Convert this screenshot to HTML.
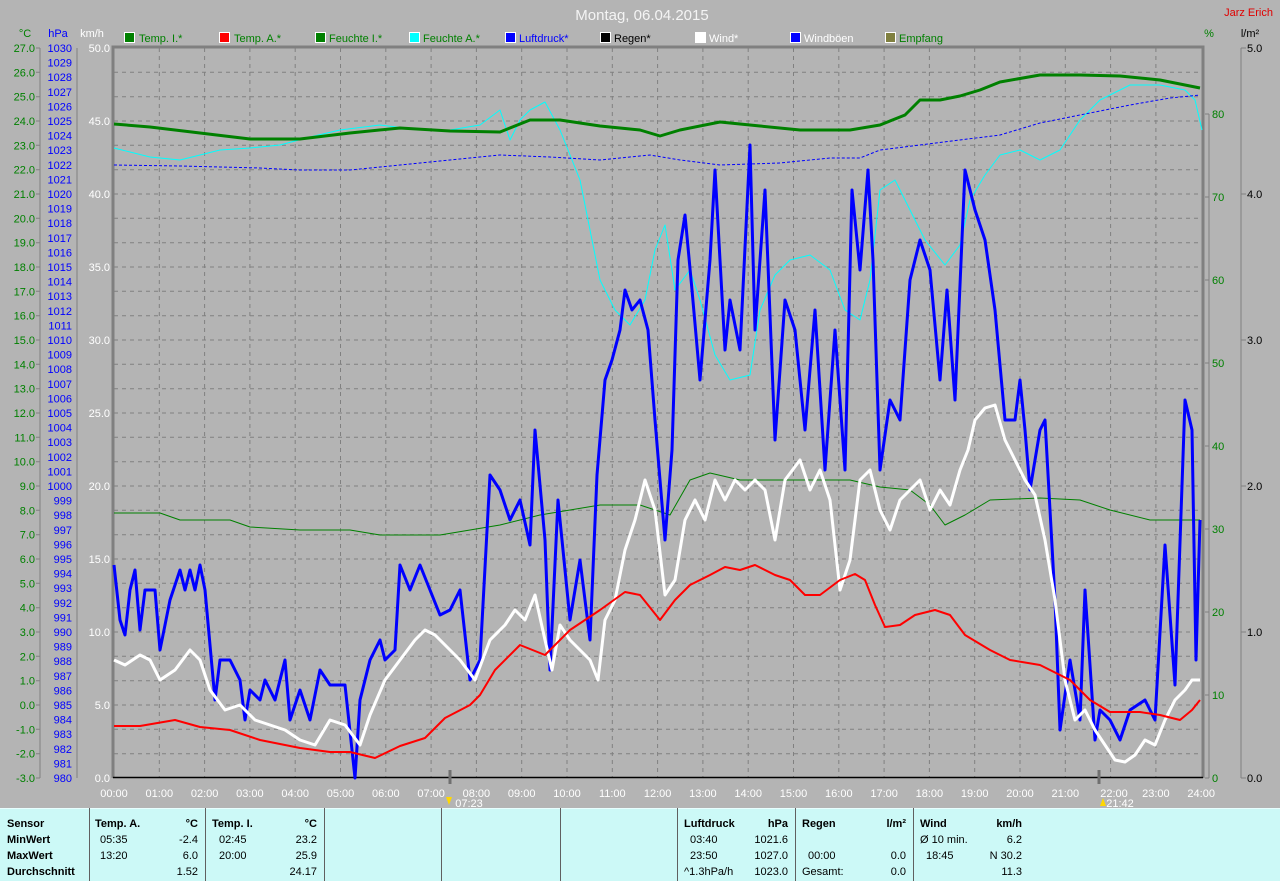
<!DOCTYPE html>
<html><head><meta charset="utf-8"><style>
html,body{margin:0;padding:0;background:#b4b4b4;}
svg{display:block;font-family:"Liberation Sans",sans-serif;}
</style></head><body>
<svg width="1280" height="881" viewBox="0 0 1280 881" xmlns="http://www.w3.org/2000/svg">
<rect width="1280" height="881" fill="#b4b4b4"/>
<text x="642" y="20" fill="#f4f4f4" font-size="15" text-anchor="middle">Montag, 06.04.2015</text>
<text x="1273" y="16" fill="#e00000" font-size="11" text-anchor="end">Jarz Erich</text>
<!-- legend -->
<g font-size="11">
<rect x="124.5" y="32.5" width="10" height="10" fill="#008000" stroke="#fff"/><text x="139" y="42" fill="#008000">Temp. I.*</text>
<rect x="219.5" y="32.5" width="10" height="10" fill="#ff0000" stroke="#fff"/><text x="234" y="42" fill="#008000">Temp. A.*</text>
<rect x="315.5" y="32.5" width="10" height="10" fill="#008000" stroke="#fff"/><text x="329" y="42" fill="#008000">Feuchte I.*</text>
<rect x="409.5" y="32.5" width="10" height="10" fill="#00ffff" stroke="#fff"/><text x="423" y="42" fill="#008000">Feuchte A.*</text>
<rect x="505.5" y="32.5" width="10" height="10" fill="#0000ff" stroke="#fff"/><text x="519" y="42" fill="#0000ff">Luftdruck*</text>
<rect x="600.5" y="32.5" width="10" height="10" fill="#000" stroke="#fff"/><text x="614" y="42" fill="#000">Regen*</text>
<rect x="695.5" y="32.5" width="10" height="10" fill="#fff" stroke="#fff"/><text x="709" y="42" fill="#fff">Wind*</text>
<rect x="790.5" y="32.5" width="10" height="10" fill="#0000ff" stroke="#fff"/><text x="804" y="42" fill="#fff">Windböen</text>
<rect x="885.5" y="32.5" width="10" height="10" fill="#808040" stroke="#fff"/><text x="899" y="42" fill="#008000">Empfang</text>
</g>
<!-- axis headers -->
<g font-size="11">
<text x="25" y="37" fill="#008000" text-anchor="middle">°C</text>
<text x="58" y="37" fill="#0000ff" text-anchor="middle">hPa</text>
<text x="92" y="37" fill="#fff" text-anchor="middle">km/h</text>
<text x="1209" y="37" fill="#008000" text-anchor="middle">%</text>
<text x="1250" y="37" fill="#000" text-anchor="middle">l/m²</text>
</g>
<!-- grid -->
<path stroke="#808080" stroke-width="1" stroke-dasharray="4,4" fill="none" d="M114 72.3H1201M114 96.7H1201M114 121H1201M114 145.3H1201M114 169.7H1201M114 194H1201M114 218.3H1201M114 242.7H1201M114 267H1201M114 291.3H1201M114 315.7H1201M114 340H1201M114 364.3H1201M114 388.7H1201M114 413H1201M114 437.3H1201M114 461.7H1201M114 486H1201M114 510.3H1201M114 534.7H1201M114 559H1201M114 583.3H1201M114 607.7H1201M114 632H1201M114 656.3H1201M114 680.7H1201M114 705H1201M114 729.3H1201M114 753.7H1201
M159.3 48V778M204.6 48V778M249.9 48V778M295.2 48V778M340.5 48V778M385.8 48V778M431.1 48V778M476.4 48V778M521.7 48V778M567 48V778M612.3 48V778M657.6 48V778M702.9 48V778M748.2 48V778M793.5 48V778M838.8 48V778M884.1 48V778M929.4 48V778M974.7 48V778M1020 48V778M1065.3 48V778M1110.6 48V778M1155.9 48V778"/>
<!-- frame -->
<path d="M113 778V47H1203V778" stroke="#808080" stroke-width="3" fill="none"/>
<line x1="113" y1="777.5" x2="1203" y2="777.5" stroke="#000" stroke-width="1.5"/>
<!-- axis lines -->
<path d="M40 48V778M77 48V778M1209 114V778M1241 48V778" stroke="#808080" fill="none"/>
<!-- markers -->
<path d="M450 770V784M1099 770V784" stroke="#707070" stroke-width="3"/>
<!-- left labels -->
<g font-size="11" fill="#008000" text-anchor="end" transform="translate(0,4)">
<text x="35" y="48">27.0</text><text x="35" y="72.3">26.0</text><text x="35" y="96.7">25.0</text><text x="35" y="121">24.0</text><text x="35" y="145.3">23.0</text><text x="35" y="169.7">22.0</text><text x="35" y="194">21.0</text><text x="35" y="218.3">20.0</text><text x="35" y="242.7">19.0</text><text x="35" y="267">18.0</text><text x="35" y="291.3">17.0</text><text x="35" y="315.7">16.0</text><text x="35" y="340">15.0</text><text x="35" y="364.3">14.0</text><text x="35" y="388.7">13.0</text><text x="35" y="413">12.0</text><text x="35" y="437.3">11.0</text><text x="35" y="461.7">10.0</text><text x="35" y="486">9.0</text><text x="35" y="510.3">8.0</text><text x="35" y="534.7">7.0</text><text x="35" y="559">6.0</text><text x="35" y="583.3">5.0</text><text x="35" y="607.7">4.0</text><text x="35" y="632">3.0</text><text x="35" y="656.3">2.0</text><text x="35" y="680.7">1.0</text><text x="35" y="705">0.0</text><text x="35" y="729.3">-1.0</text><text x="35" y="753.7">-2.0</text><text x="35" y="778">-3.0</text>
</g>
<path stroke="#808080" d="M36 48H40M36 72.3H40M36 96.7H40M36 121H40M36 145.3H40M36 169.7H40M36 194H40M36 218.3H40M36 242.7H40M36 267H40M36 291.3H40M36 315.7H40M36 340H40M36 364.3H40M36 388.7H40M36 413H40M36 437.3H40M36 461.7H40M36 486H40M36 510.3H40M36 534.7H40M36 559H40M36 583.3H40M36 607.7H40M36 632H40M36 656.3H40M36 680.7H40M36 705H40M36 729.3H40M36 753.7H40M36 778H40"/>
<g font-size="11" fill="#0000ff" text-anchor="end" transform="translate(0,4)">
<text x="72" y="48">1030</text><text x="72" y="62.6">1029</text><text x="72" y="77.2">1028</text><text x="72" y="91.8">1027</text><text x="72" y="106.4">1026</text><text x="72" y="121">1025</text><text x="72" y="135.6">1024</text><text x="72" y="150.2">1023</text><text x="72" y="164.8">1022</text><text x="72" y="179.4">1021</text><text x="72" y="194">1020</text><text x="72" y="208.6">1019</text><text x="72" y="223.2">1018</text><text x="72" y="237.8">1017</text><text x="72" y="252.4">1016</text><text x="72" y="267">1015</text><text x="72" y="281.6">1014</text><text x="72" y="296.2">1013</text><text x="72" y="310.8">1012</text><text x="72" y="325.4">1011</text><text x="72" y="340">1010</text><text x="72" y="354.6">1009</text><text x="72" y="369.2">1008</text><text x="72" y="383.8">1007</text><text x="72" y="398.4">1006</text><text x="72" y="413">1005</text><text x="72" y="427.6">1004</text><text x="72" y="442.2">1003</text><text x="72" y="456.8">1002</text><text x="72" y="471.4">1001</text><text x="72" y="486">1000</text><text x="72" y="500.6">999</text><text x="72" y="515.2">998</text><text x="72" y="529.8">997</text><text x="72" y="544.4">996</text><text x="72" y="559">995</text><text x="72" y="573.6">994</text><text x="72" y="588.2">993</text><text x="72" y="602.8">992</text><text x="72" y="617.4">991</text><text x="72" y="632">990</text><text x="72" y="646.6">989</text><text x="72" y="661.2">988</text><text x="72" y="675.8">987</text><text x="72" y="690.4">986</text><text x="72" y="705">985</text><text x="72" y="719.6">984</text><text x="72" y="734.2">983</text><text x="72" y="748.8">982</text><text x="72" y="763.4">981</text><text x="72" y="778">980</text>
</g>
<g font-size="11" fill="#fff" text-anchor="end" transform="translate(0,4)">
<text x="110" y="48">50.0</text><text x="110" y="194">40.0</text><text x="110" y="121">45.0</text><text x="110" y="267">35.0</text><text x="110" y="340">30.0</text><text x="110" y="413">25.0</text><text x="110" y="486">20.0</text><text x="110" y="559">15.0</text><text x="110" y="632">10.0</text><text x="110" y="705">5.0</text><text x="110" y="778">0.0</text>
</g>
<g font-size="11" fill="#008000" transform="translate(0,4)">
<text x="1212" y="114">80</text><text x="1212" y="197">70</text><text x="1212" y="280">60</text><text x="1212" y="363">50</text><text x="1212" y="446">40</text><text x="1212" y="529">30</text><text x="1212" y="612">20</text><text x="1212" y="695">10</text><text x="1212" y="778">0</text>
</g>
<g font-size="11" fill="#000" transform="translate(0,4)">
<text x="1247" y="48">5.0</text><text x="1247" y="194">4.0</text><text x="1247" y="340">3.0</text><text x="1247" y="486">2.0</text><text x="1247" y="632">1.0</text><text x="1247" y="778">0.0</text>
</g>
<path stroke="#808080" d="M1241 48H1246M1241 194H1246M1241 340H1246M1241 486H1246M1241 632H1246M1241 778H1246M1205 114H1209M1205 197H1209M1205 280H1209M1205 363H1209M1205 446H1209M1205 529H1209M1205 612H1209M1205 695H1209M1205 778H1209"/>
<!-- hour labels -->
<g font-size="11" fill="#fff" text-anchor="middle">
<text x="114" y="797">00:00</text><text x="159.3" y="797">01:00</text><text x="204.6" y="797">02:00</text><text x="249.9" y="797">03:00</text><text x="295.2" y="797">04:00</text><text x="340.5" y="797">05:00</text><text x="385.8" y="797">06:00</text><text x="431.1" y="797">07:00</text><text x="476.4" y="797">08:00</text><text x="521.7" y="797">09:00</text><text x="567" y="797">10:00</text><text x="612.3" y="797">11:00</text><text x="657.6" y="797">12:00</text><text x="702.9" y="797">13:00</text><text x="748.2" y="797">14:00</text><text x="793.5" y="797">15:00</text><text x="838.8" y="797">16:00</text><text x="884.1" y="797">17:00</text><text x="929.4" y="797">18:00</text><text x="974.7" y="797">19:00</text><text x="1020" y="797">20:00</text><text x="1065.3" y="797">21:00</text><text x="1114" y="797">22:00</text><text x="1155.9" y="797">23:00</text><text x="1201.2" y="797">24:00</text>
<text x="469" y="807">07:23</text><text x="1120" y="807">21:42</text>
</g>
<path d="M446 797l3 8 3-8z" fill="#ffd800"/><path d="M1100 806l3-8 3 8z" fill="#ffd800"/>
<g fill="none" stroke-linejoin="round">
<!-- Feuchte A -->
<polyline stroke="#00ffff" stroke-width="1" points="114,148 130,152 150,157 180,160 220,150 250,148 280,145 310,137 340,130 380,125 420,130 450,130 480,125 500,110 510,140 520,120 530,110 545,102 560,130 580,180 590,230 600,280 615,310 630,325 645,300 655,250 665,225 675,290 690,270 700,300 715,355 730,380 750,375 760,310 775,275 790,260 810,255 830,270 845,310 860,320 870,280 880,190 895,180 910,210 925,240 945,265 960,245 970,200 985,175 1000,155 1020,150 1040,160 1060,150 1080,120 1100,100 1130,85 1160,85 1185,90 1195,100 1202,130"/>
<!-- Luftdruck -->
<polyline stroke="#0000ff" stroke-width="1" stroke-dasharray="3,2" points="114,165 180,166 260,168 300,170 350,170 400,165 450,160 500,155 550,157 600,160 650,155 680,160 720,165 780,163 830,158 860,158 880,150 920,145 960,140 1000,135 1040,123 1080,115 1130,105 1170,98 1200,95"/>
<!-- Feuchte I -->
<polyline stroke="#008000" stroke-width="3" points="114,124 150,127 200,133 250,139 300,139 350,133 400,128 450,131 500,132 530,120 560,120 600,126 640,130 660,136 680,130 720,122 760,126 800,130 850,130 880,125 905,115 920,100 940,100 960,96 980,90 1000,82 1040,75 1080,75 1120,76 1160,80 1200,88"/>
<!-- Temp I -->
<polyline stroke="#008000" stroke-width="1" points="114,513 160,513 180,520 230,520 250,527 300,530 350,530 380,535 440,535 470,530 500,525 540,515 600,505 640,505 670,515 690,480 710,473 740,480 800,480 850,480 880,487 910,490 930,505 945,525 965,515 990,500 1040,498 1080,500 1110,510 1150,520 1200,520"/>
<!-- Windböen -->
<polyline stroke="#0000ff" stroke-width="3" points="114,565 120,620 125,635 130,590 135,570 140,630 145,590 155,590 160,650 170,600 180,570 185,590 190,570 195,590 200,565 205,590 215,700 220,660 230,660 240,680 245,720 250,690 260,700 265,680 275,700 285,660 290,720 300,690 310,720 320,670 330,685 345,685 355,778 360,700 370,660 380,640 385,660 395,650 400,565 410,590 420,565 430,590 440,615 450,610 460,590 470,680 480,660 490,475 500,490 510,520 520,500 530,545 535,430 545,540 550,670 558,500 570,620 580,560 590,640 597,475 605,380 612,360 620,330 625,290 632,310 640,300 648,330 655,420 665,540 672,450 678,260 685,215 692,290 700,380 710,260 715,170 725,350 730,300 740,350 750,145 755,330 765,190 775,440 785,300 795,330 805,430 815,310 825,470 835,330 845,470 852,190 860,270 868,170 873,260 880,470 890,400 900,420 910,280 920,240 930,270 940,380 947,290 955,400 965,170 975,210 985,240 995,310 1005,420 1015,420 1020,380 1025,430 1030,490 1040,430 1045,420 1055,600 1060,730 1070,660 1080,720 1085,590 1095,740 1100,710 1110,720 1120,740 1130,710 1145,700 1155,720 1165,545 1175,685 1185,400 1192,430 1196,660 1200,520"/>
<!-- Wind -->
<polyline stroke="#ffffff" stroke-width="3" points="114,660 125,665 140,655 150,660 160,680 175,670 190,650 200,660 210,690 225,710 240,705 255,720 270,725 285,730 300,740 315,745 330,720 345,725 360,745 370,715 385,680 400,660 415,640 425,630 435,635 450,650 460,660 475,680 490,640 505,625 515,610 525,620 535,595 545,640 552,670 560,625 570,640 580,650 590,660 598,680 605,620 615,600 625,550 635,520 645,480 655,510 665,595 675,580 685,520 695,500 705,520 715,480 725,500 735,480 745,490 755,480 765,490 775,540 785,480 800,460 810,490 820,470 830,500 840,590 850,560 860,480 870,470 880,510 890,530 900,500 910,490 920,480 930,510 940,490 950,505 960,470 968,450 975,420 985,408 995,405 1005,440 1015,460 1025,480 1035,495 1045,540 1055,600 1065,680 1075,720 1085,710 1095,730 1105,745 1115,760 1125,762 1135,755 1145,740 1155,745 1165,720 1175,700 1185,690 1192,680 1200,680"/>
<!-- Temp A -->
<polyline stroke="#ff0000" stroke-width="2" points="114,726 140,726 175,720 200,727 230,730 260,740 300,748 330,752 350,752 375,758 400,746 425,738 445,718 470,705 480,695 495,670 520,645 545,655 570,630 600,610 625,592 640,595 660,620 675,600 690,585 710,575 725,567 740,570 755,565 775,575 790,580 805,595 820,595 840,580 855,574 865,580 875,605 885,627 900,625 915,615 935,610 950,615 965,635 990,650 1010,660 1040,665 1070,680 1090,700 1110,712 1140,712 1160,715 1180,720 1192,710 1200,700"/>
</g>
<!-- table -->
<rect x="0" y="808" width="1280" height="73" fill="#ccf9f7"/>
<line x1="0" y1="808.5" x2="1280" y2="808.5" stroke="#e8ffff"/>
<path stroke="#606060" d="M89.5 808V881M205.5 808V881M324.5 808V881M441.5 808V881M560.5 808V881M677.5 808V881M795.5 808V881M913.5 808V881"/>
<g font-size="11" fill="#000">
<g font-weight="bold">
<text x="7" y="827">Sensor</text><text x="7" y="843">MinWert</text><text x="7" y="859">MaxWert</text><text x="7" y="875">Durchschnitt</text>
<text x="95" y="827">Temp. A.</text><text x="198" y="827" text-anchor="end">°C</text>
<text x="212" y="827">Temp. I.</text><text x="317" y="827" text-anchor="end">°C</text>
<text x="684" y="827">Luftdruck</text><text x="788" y="827" text-anchor="end">hPa</text>
<text x="802" y="827">Regen</text><text x="906" y="827" text-anchor="end">l/m²</text>
<text x="920" y="827">Wind</text><text x="1022" y="827" text-anchor="end">km/h</text>
</g>
<text x="100" y="843">05:35</text><text x="198" y="843" text-anchor="end">-2.4</text>
<text x="100" y="859">13:20</text><text x="198" y="859" text-anchor="end">6.0</text>
<text x="198" y="875" text-anchor="end">1.52</text>
<text x="219" y="843">02:45</text><text x="317" y="843" text-anchor="end">23.2</text>
<text x="219" y="859">20:00</text><text x="317" y="859" text-anchor="end">25.9</text>
<text x="317" y="875" text-anchor="end">24.17</text>
<text x="690" y="843">03:40</text><text x="788" y="843" text-anchor="end">1021.6</text>
<text x="690" y="859">23:50</text><text x="788" y="859" text-anchor="end">1027.0</text>
<text x="684" y="875">^1.3hPa/h</text><text x="788" y="875" text-anchor="end">1023.0</text>
<text x="808" y="859">00:00</text><text x="906" y="859" text-anchor="end">0.0</text>
<text x="802" y="875">Gesamt:</text><text x="906" y="875" text-anchor="end">0.0</text>
<text x="920" y="843">Ø 10 min.</text><text x="1022" y="843" text-anchor="end">6.2</text>
<text x="926" y="859">18:45</text><text x="1022" y="859" text-anchor="end">N 30.2</text>
<text x="1022" y="875" text-anchor="end">11.3</text>
</g>
</svg>
</body></html>
